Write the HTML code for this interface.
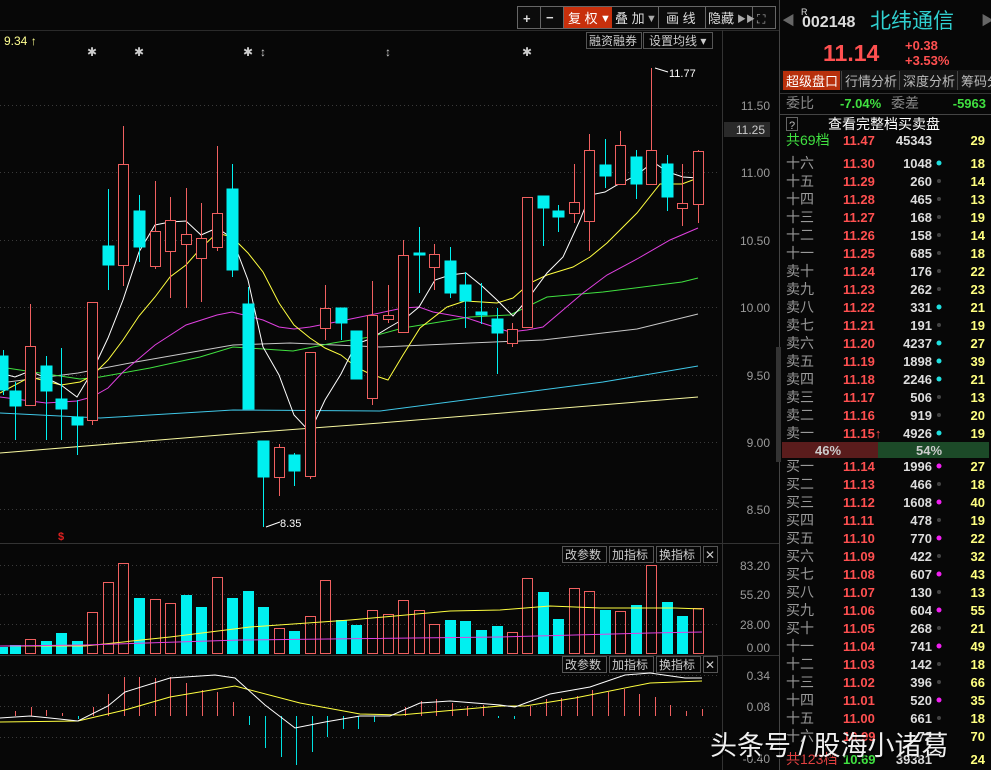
<!DOCTYPE html>
<html><head><meta charset="utf-8"><style>
html,body{margin:0;padding:0;background:#070707;width:991px;height:770px;overflow:hidden}
svg{display:block}
text{font-family:"Liberation Sans","Noto Sans CJK SC",sans-serif}
</style></head><body>
<svg width="991" height="770" viewBox="0 0 991 770" xmlns="http://www.w3.org/2000/svg">
<rect width="991" height="770" fill="#070707"/>
<!-- top toolbar -->
<g font-size="13" fill="#ddd">
<rect x="517.5" y="6.5" width="258" height="22" fill="#0c0c0c" stroke="#666"/>
<line x1="540.5" y1="6" x2="540.5" y2="29" stroke="#666"/>
<line x1="563.5" y1="6" x2="563.5" y2="29" stroke="#666"/>
<rect x="564" y="7" width="48" height="21" fill="#c8300c"/>
<line x1="658.5" y1="6" x2="658.5" y2="29" stroke="#666"/>
<line x1="705.5" y1="6" x2="705.5" y2="29" stroke="#666"/>
<line x1="752.5" y1="6" x2="752.5" y2="29" stroke="#666"/>
<text x="523" y="23" font-weight="bold">+</text>
<text x="546" y="22" font-weight="bold">−</text>
<text x="568" y="23" fill="#fff">复 权</text><text x="600" y="22" fill="#fff" font-size="11">▼</text>
<text x="615" y="23">叠 加</text><text x="646" y="22" fill="#aaa" font-size="11">▼</text>
<text x="666" y="23">画  线</text>
<text x="708" y="23">隐藏</text><text x="737" y="22" font-size="9" fill="#aaa">▶▶</text>
<text x="757" y="23" font-size="12" fill="#aaa">⛶</text>
</g>
<line x1="0" y1="30.5" x2="779" y2="30.5" stroke="#2a2a2a"/>
<text x="4" y="45" font-size="12" fill="#ffff90">9.34 ↑</text>
<g font-size="12" fill="#ccc">
<rect x="586.5" y="32.5" width="55" height="16" fill="none" stroke="#555"/>
<text x="589" y="45">融资融券</text>
<rect x="643.5" y="32.5" width="69" height="16" fill="none" stroke="#555"/>
<text x="649" y="45">设置均线 ▾</text>
</g>
<g font-size="12" fill="#ccc" text-anchor="middle">
<text x="92" y="56">✱</text><text x="139" y="56">✱</text><text x="248" y="56">✱</text><text x="263" y="56">↕</text><text x="388" y="56">↕</text><text x="527" y="56">✱</text>
</g>
<!-- grid -->
<g stroke="#3a3a3a" stroke-dasharray="1,3">
<line x1="0" y1="105.5" x2="720" y2="105.5"/><line x1="0" y1="172.5" x2="720" y2="172.5"/><line x1="0" y1="240.5" x2="720" y2="240.5"/><line x1="0" y1="307.5" x2="720" y2="307.5"/><line x1="0" y1="375.5" x2="720" y2="375.5"/><line x1="0" y1="442.5" x2="720" y2="442.5"/><line x1="0" y1="509.5" x2="720" y2="509.5"/>
<line x1="0" y1="565.5" x2="720" y2="565.5"/><line x1="0" y1="594.5" x2="720" y2="594.5"/><line x1="0" y1="624.5" x2="720" y2="624.5"/>
<line x1="0" y1="675.5" x2="720" y2="675.5"/><line x1="0" y1="706.5" x2="720" y2="706.5"/><line x1="0" y1="737.5" x2="720" y2="737.5"/>
</g>
<line x1="722.5" y1="30" x2="722.5" y2="770" stroke="#333"/>
<line x1="0" y1="543.5" x2="779" y2="543.5" stroke="#333"/>
<line x1="0" y1="655.5" x2="779" y2="655.5" stroke="#333"/>
<line x1="779.5" y1="0" x2="779.5" y2="770" stroke="#444"/>
<rect x="776" y="347" width="5" height="115" fill="#333"/>
<!-- axis labels -->
<g font-size="12" fill="#9a9a9a" text-anchor="end">
<text x="770" y="110">11.50</text>
<rect x="724" y="122" width="46" height="15" fill="#2a2a2a"/>
<text x="765" y="134" fill="#ccc">11.25</text>
<text x="770" y="177">11.00</text><text x="770" y="245">10.50</text><text x="770" y="312">10.00</text><text x="770" y="380">9.50</text><text x="770" y="447">9.00</text><text x="770" y="514">8.50</text>
<text x="770" y="570">83.20</text><text x="770" y="599">55.20</text><text x="770" y="629">28.00</text><text x="770" y="652">0.00</text>
<text x="770" y="680">0.34</text><text x="770" y="711">0.08</text><text x="770" y="763">-0.40</text>
</g>
<!-- MA lines -->
<g fill="none" stroke-width="1">
<polyline stroke="#f8f8a0" points="0,453 233,434 380,423 698,397"/>
<polyline stroke="#40c8e8" points="0,413 100,418 233,410 380,411 603,382 698,366"/>
<polyline stroke="#c8c8c8" points="0,383 78,373 130,363 233,345 290,343 380,347 470,343 543,340 637,329 698,314"/>
<polyline stroke="#40e040" points="0,367 80,379 100,377 150,368 200,357 233,347 293,351 333,343 370,337 403,328 470,317 510,315 547,297 603,292 682,282 698,278"/>
<polyline stroke="#e040e0" points="0,397 46,403 77,401 92,397 108,388 123,372 155,345 186,325 217,315 232,312 248,316 263,320 279,327 294,329 310,327 341,321 370,315 403,308 419,307 433,312 467,318 482,323 510,332 527,330 543,327 563,310 583,293 607,275 637,259 670,240 698,228"/>
<polyline stroke="#ffff40" points="0,393 30,377 61,385 80,382 92,376 108,360 123,340 139,316 155,297 170,277 186,265 201,248 217,233 232,237 248,253 263,272 279,303 294,325 310,338 325,348 341,355 356,367 370,374 388,380 403,355 420,328 447,307 465,301 482,302 497,303 513,298 530,283 547,275 573,267 590,257 607,243 623,227 637,213 660,184 682,184 698,178"/>
<polyline stroke="#ffffff" points="0,373 15,377 30,371 46,378 61,385 77,397 92,372 108,338 123,300 139,252 155,225 170,222 186,221 201,235 217,228 232,238 248,280 263,347 279,375 294,415 310,432 325,400 341,374 356,344 370,339 388,328 407,317 419,307 435,280 450,275 466,273 482,286 497,300 513,316 527,300 547,273 563,257 580,220 590,195 605,192 617,185 637,175 653,162 668,172 683,177 698,178"/>
</g>
<!-- candles -->
<g stroke-width="1" shape-rendering="crispEdges">
<g stroke="#00f0f0" fill="#00f0f0">
<line x1="3.5" y1="350" x2="3.5" y2="395"/><rect x="-2" y="356" width="10" height="34"/>
<line x1="15.5" y1="382" x2="15.5" y2="440"/><rect x="10" y="391" width="11" height="15"/>
<line x1="46.5" y1="356" x2="46.5" y2="440"/><rect x="41" y="366" width="11" height="25"/>
<line x1="61.5" y1="348" x2="61.5" y2="440"/><rect x="56" y="399" width="11" height="10"/>
<line x1="77.5" y1="400" x2="77.5" y2="455"/><rect x="72" y="417" width="11" height="8"/>
<line x1="108.5" y1="189" x2="108.5" y2="290"/><rect x="103" y="246" width="11" height="19"/>
<line x1="139.5" y1="195" x2="139.5" y2="262"/><rect x="134" y="211" width="11" height="36"/>
<line x1="232.5" y1="164" x2="232.5" y2="277"/><rect x="227" y="189" width="11" height="81"/>
<line x1="248.5" y1="287" x2="248.5" y2="409"/><rect x="243" y="304" width="11" height="105"/>
<line x1="263.5" y1="441" x2="263.5" y2="527"/><rect x="258" y="441" width="11" height="36"/>
<line x1="294.5" y1="453" x2="294.5" y2="486"/><rect x="289" y="455" width="11" height="16"/>
<line x1="341.5" y1="308" x2="341.5" y2="340"/><rect x="336" y="308" width="11" height="15"/>
<line x1="356.5" y1="331" x2="356.5" y2="379"/><rect x="351" y="331" width="11" height="48"/>
<line x1="419.5" y1="227" x2="419.5" y2="293"/><rect x="414" y="253" width="11" height="2"/>
<line x1="450.5" y1="247" x2="450.5" y2="298"/><rect x="445" y="261" width="11" height="32"/>
<line x1="465.5" y1="272" x2="465.5" y2="328"/><rect x="460" y="285" width="11" height="16"/>
<line x1="481.5" y1="283" x2="481.5" y2="324"/><rect x="476" y="312" width="11" height="3"/>
<line x1="497.5" y1="308" x2="497.5" y2="374"/><rect x="492" y="319" width="11" height="14"/>
<line x1="543.5" y1="196" x2="543.5" y2="246"/><rect x="538" y="196" width="11" height="12"/>
<line x1="558.5" y1="205" x2="558.5" y2="232"/><rect x="553" y="211" width="11" height="6"/>
<line x1="605.5" y1="139" x2="605.5" y2="188"/><rect x="600" y="165" width="11" height="11"/>
<line x1="636.5" y1="150" x2="636.5" y2="199"/><rect x="631" y="157" width="11" height="27"/>
<line x1="667.5" y1="155" x2="667.5" y2="211"/><rect x="662" y="164" width="11" height="33"/>
</g>
<g stroke="#f06060" fill="#070707">
<line x1="30.5" y1="304" x2="30.5" y2="406"/><rect x="25.5" y="346.5" width="10" height="59"/>
<line x1="92.5" y1="302" x2="92.5" y2="425"/><rect x="87.5" y="302.5" width="10" height="118"/>
<line x1="123.5" y1="126" x2="123.5" y2="286"/><rect x="118.5" y="164.5" width="10" height="101"/>
<line x1="155.5" y1="181" x2="155.5" y2="269"/><rect x="150.5" y="231.5" width="10" height="35"/>
<line x1="170.5" y1="197" x2="170.5" y2="298"/><rect x="165.5" y="220.5" width="10" height="31"/>
<line x1="186.5" y1="188" x2="186.5" y2="308"/><rect x="181.5" y="234.5" width="10" height="10"/>
<line x1="201.5" y1="203" x2="201.5" y2="302"/><rect x="196.5" y="238.5" width="10" height="20"/>
<line x1="217.5" y1="146" x2="217.5" y2="251"/><rect x="212.5" y="213.5" width="10" height="34"/>
<line x1="279.5" y1="444" x2="279.5" y2="496"/><rect x="274.5" y="447.5" width="10" height="30"/>
<line x1="310.5" y1="352" x2="310.5" y2="479"/><rect x="305.5" y="352.5" width="10" height="124"/>
<line x1="325.5" y1="285" x2="325.5" y2="340"/><rect x="320.5" y="308.5" width="10" height="20"/>
<line x1="372.5" y1="281" x2="372.5" y2="405"/><rect x="367.5" y="315.5" width="10" height="83"/>
<line x1="388.5" y1="285" x2="388.5" y2="323"/><rect x="383.5" y="315.5" width="10" height="4"/>
<line x1="403.5" y1="240" x2="403.5" y2="332"/><rect x="398.5" y="255.5" width="10" height="77"/>
<line x1="434.5" y1="244" x2="434.5" y2="290"/><rect x="429.5" y="254.5" width="10" height="13"/>
<line x1="512.5" y1="323" x2="512.5" y2="347"/><rect x="507.5" y="329.5" width="10" height="14"/>
<rect x="522.5" y="197.5" width="10" height="130"/>
<line x1="574.5" y1="164" x2="574.5" y2="223"/><rect x="569.5" y="202.5" width="10" height="11"/>
<line x1="589.5" y1="134" x2="589.5" y2="251"/><rect x="584.5" y="150.5" width="10" height="71"/>
<line x1="620.5" y1="131" x2="620.5" y2="184"/><rect x="615.5" y="145.5" width="10" height="39"/>
<line x1="651.5" y1="68" x2="651.5" y2="184"/><rect x="646.5" y="150.5" width="10" height="34"/>
<line x1="682.5" y1="164" x2="682.5" y2="226"/><rect x="677.5" y="203.5" width="10" height="5"/>
<line x1="698.5" y1="150" x2="698.5" y2="223"/><rect x="693.5" y="151.5" width="10" height="53"/>
</g>
</g>
<g font-size="11" fill="#fff" font-family="Liberation Mono,monospace">
<line x1="655" y1="68" x2="668" y2="72" stroke="#fff"/><text x="669" y="77">11.77</text>
<line x1="266" y1="527" x2="280" y2="522" stroke="#fff"/><text x="280" y="527">8.35</text>
</g>
<text x="58" y="540" font-size="11" fill="#e02020" font-weight="bold">$</text>
<!-- panel buttons -->
<g font-size="12" fill="#ccc">
<rect x="562.5" y="546.5" width="44" height="16" fill="none" stroke="#555"/><text x="565" y="559">改参数</text>
<rect x="609.5" y="546.5" width="44" height="16" fill="none" stroke="#555"/><text x="612" y="559">加指标</text>
<rect x="656.5" y="546.5" width="44" height="16" fill="none" stroke="#555"/><text x="659" y="559">换指标</text>
<rect x="703.5" y="546.5" width="14" height="16" fill="none" stroke="#555"/><text x="705" y="559">✕</text>
<rect x="562.5" y="656.5" width="44" height="16" fill="none" stroke="#555"/><text x="565" y="669">改参数</text>
<rect x="609.5" y="656.5" width="44" height="16" fill="none" stroke="#555"/><text x="612" y="669">加指标</text>
<rect x="656.5" y="656.5" width="44" height="16" fill="none" stroke="#555"/><text x="659" y="669">换指标</text>
<rect x="703.5" y="656.5" width="14" height="16" fill="none" stroke="#555"/><text x="705" y="669">✕</text>
</g>
<!-- volume bars -->
<g shape-rendering="crispEdges">
<g fill="#00f0f0">
<rect x="-2" y="647" width="10" height="7"/><rect x="10" y="645" width="11" height="9"/><rect x="41" y="641" width="11" height="13"/><rect x="56" y="633" width="11" height="21"/><rect x="72" y="641" width="11" height="13"/>
<rect x="134" y="598" width="11" height="56"/><rect x="181" y="595" width="11" height="59"/><rect x="196" y="607" width="11" height="47"/><rect x="227" y="598" width="11" height="56"/><rect x="243" y="591" width="11" height="63"/><rect x="258" y="607" width="11" height="47"/>
<rect x="289" y="631" width="11" height="23"/><rect x="336" y="620" width="11" height="34"/><rect x="351" y="625" width="11" height="29"/>
<rect x="445" y="620" width="11" height="34"/><rect x="460" y="621" width="11" height="33"/><rect x="476" y="630" width="11" height="24"/><rect x="492" y="626" width="11" height="28"/>
<rect x="538" y="592" width="11" height="62"/><rect x="553" y="619" width="11" height="35"/><rect x="600" y="610" width="11" height="44"/><rect x="631" y="605" width="11" height="49"/><rect x="662" y="602" width="11" height="52"/><rect x="677" y="616" width="11" height="38"/>
</g>
<g fill="none" stroke="#f06060">
<rect x="25.5" y="639.5" width="10" height="14"/><rect x="87.5" y="612.5" width="10" height="41"/><rect x="103.5" y="582.5" width="10" height="71"/><rect x="118.5" y="563.5" width="10" height="90"/>
<rect x="150.5" y="599.5" width="10" height="54"/><rect x="165.5" y="603.5" width="10" height="50"/><rect x="212.5" y="577.5" width="10" height="76"/>
<rect x="274.5" y="628.5" width="10" height="25"/><rect x="305.5" y="616.5" width="10" height="37"/><rect x="320.5" y="580.5" width="10" height="73"/>
<rect x="367.5" y="610.5" width="10" height="43"/><rect x="383.5" y="614.5" width="10" height="39"/><rect x="398.5" y="600.5" width="10" height="53"/><rect x="414.5" y="610.5" width="10" height="43"/><rect x="429.5" y="624.5" width="10" height="29"/>
<rect x="507.5" y="632.5" width="10" height="21"/><rect x="522.5" y="578.5" width="10" height="75"/><rect x="569.5" y="588.5" width="10" height="65"/><rect x="584.5" y="591.5" width="10" height="62"/>
<rect x="615.5" y="611.5" width="10" height="42"/><rect x="646.5" y="565.5" width="10" height="88"/><rect x="693.5" y="608.5" width="10" height="45"/>
</g>
</g>
<polyline fill="none" stroke="#ffff40" points="0,646 85,646 170,637 250,627 350,620 450,611 500,610 550,606 600,608 675,608 702,609"/>
<polyline fill="none" stroke="#e040e0" points="0,646 85,645 240,640 500,637 650,633 702,632"/>
<!-- MACD -->
<g stroke-width="1" shape-rendering="crispEdges">
<g stroke="#f06060">
<line x1="15.5" y1="711" x2="15.5" y2="716"/><line x1="31.5" y1="707" x2="31.5" y2="716"/><line x1="46.5" y1="710" x2="46.5" y2="716"/><line x1="62.5" y1="713" x2="62.5" y2="716"/>
<line x1="93.5" y1="707" x2="93.5" y2="716"/><line x1="108.5" y1="694" x2="108.5" y2="716"/><line x1="124.5" y1="677" x2="124.5" y2="716"/><line x1="139.5" y1="677" x2="139.5" y2="716"/><line x1="155.5" y1="678" x2="155.5" y2="716"/><line x1="170.5" y1="677" x2="170.5" y2="716"/><line x1="186.5" y1="683" x2="186.5" y2="716"/><line x1="202.5" y1="690" x2="202.5" y2="716"/><line x1="217.5" y1="692" x2="217.5" y2="716"/><line x1="233.5" y1="702" x2="233.5" y2="716"/>
<line x1="405.5" y1="707" x2="405.5" y2="716"/><line x1="421.5" y1="701" x2="421.5" y2="716"/><line x1="436.5" y1="699" x2="436.5" y2="716"/><line x1="452.5" y1="703" x2="452.5" y2="716"/><line x1="467.5" y1="706" x2="467.5" y2="716"/><line x1="483.5" y1="705" x2="483.5" y2="716"/>
<line x1="530.5" y1="706" x2="530.5" y2="716"/><line x1="546.5" y1="699" x2="546.5" y2="716"/><line x1="561.5" y1="698" x2="561.5" y2="716"/><line x1="577.5" y1="696" x2="577.5" y2="716"/><line x1="592.5" y1="690" x2="592.5" y2="716"/><line x1="608.5" y1="692" x2="608.5" y2="716"/><line x1="624.5" y1="689" x2="624.5" y2="716"/><line x1="639.5" y1="694" x2="639.5" y2="716"/><line x1="655.5" y1="697" x2="655.5" y2="716"/><line x1="670.5" y1="705" x2="670.5" y2="716"/><line x1="686.5" y1="711" x2="686.5" y2="716"/><line x1="702.5" y1="709" x2="702.5" y2="716"/>
</g>
<g stroke="#00e0e0">
<line x1="78.5" y1="716" x2="78.5" y2="719"/><line x1="249.5" y1="716" x2="249.5" y2="725"/><line x1="265.5" y1="716" x2="265.5" y2="748"/><line x1="281.5" y1="716" x2="281.5" y2="757"/><line x1="296.5" y1="716" x2="296.5" y2="765"/><line x1="312.5" y1="716" x2="312.5" y2="752"/><line x1="327.5" y1="716" x2="327.5" y2="737"/><line x1="343.5" y1="716" x2="343.5" y2="729"/><line x1="358.5" y1="716" x2="358.5" y2="729"/><line x1="374.5" y1="716" x2="374.5" y2="722"/><line x1="498.5" y1="716" x2="498.5" y2="718"/><line x1="514.5" y1="716" x2="514.5" y2="719"/>
</g>
</g>
<polyline fill="none" stroke="#ffff40" points="0,722 78,721 125,710 170,697 235,686 300,703 360,714 400,715 500,706 525,706 575,698 650,683 702,681"/>
<polyline fill="none" stroke="#ffffff" points="0,718 30,716 50,718 78,721 108,706 125,692 170,678 215,675 235,678 265,705 295,728 325,722 360,716 390,716 420,703 450,701 500,705 515,707 550,694 590,687 625,675 650,673 685,678 702,678"/>
<!-- right panel -->
<g font-family="Liberation Sans,'Noto Sans CJK SC',sans-serif">
<text x="782" y="25" font-size="13" fill="#666">◀</text>
<text x="981" y="25" font-size="13" fill="#666">▶</text>
<text x="801" y="15" font-size="9" fill="#ddd">R</text>
<text x="802" y="27" font-size="16" fill="#ddd" font-weight="bold">002148</text>
<text x="870" y="28" font-size="21" fill="#30d0d0">北纬通信</text>
<text x="823" y="61" font-size="23" fill="#ff5050" font-weight="bold">11.14</text>
<text x="905" y="50" font-size="13" fill="#ff5050" font-weight="bold">+0.38</text>
<text x="905" y="65" font-size="13" fill="#ff5050" font-weight="bold">+3.53%</text>
<rect x="780" y="70" width="211" height="20" fill="#151515"/>
<rect x="783" y="71" width="57" height="19" fill="#b8300c"/>
<line x1="841.5" y1="71" x2="841.5" y2="90" stroke="#444"/><line x1="899.5" y1="71" x2="899.5" y2="90" stroke="#444"/><line x1="957.5" y1="71" x2="957.5" y2="90" stroke="#444"/>
<g font-size="13"><text x="786" y="86" fill="#fff">超级盘口</text><text x="845" y="86" fill="#bbb">行情分析</text><text x="903" y="86" fill="#bbb">深度分析</text><text x="961" y="86" fill="#bbb">筹码分</text></g>
<line x1="780" y1="93.5" x2="991" y2="93.5" stroke="#333"/>
<text x="786" y="108" font-size="14" fill="#888">委比</text>
<text x="840" y="108" font-size="13" fill="#40e040" font-weight="bold">-7.04%</text>
<text x="891" y="108" font-size="14" fill="#888">委差</text>
<text x="986" y="108" font-size="13" fill="#40e040" font-weight="bold" text-anchor="end">-5963</text>
<line x1="780" y1="114.5" x2="991" y2="114.5" stroke="#444"/>
<rect x="786.5" y="117.5" width="11" height="13" fill="none" stroke="#666"/><text x="789" y="129" font-size="11" fill="#bbb">?</text>
<text x="828" y="129" font-size="14" fill="#fff">查看完整档买卖盘</text>
<g font-size="13" font-weight="bold">
<text x="786" y="145" fill="#40e040" font-weight="normal" font-size="14">共69档</text><text x="843" y="145" fill="#ff5050">11.47</text><text x="932" y="145" fill="#ddd" text-anchor="end">45343</text><text x="985" y="145" fill="#ffff80" text-anchor="end">29</text>
</g>
<g font-size="13" font-weight="bold">
<g font-weight="normal" font-size="14" fill="#999">
<text x="786" y="168">十六</text><text x="786" y="186">十五</text><text x="786" y="204">十四</text><text x="786" y="222">十三</text><text x="786" y="240">十二</text><text x="786" y="258">十一</text><text x="786" y="276">卖十</text><text x="786" y="294">卖九</text><text x="786" y="312">卖八</text><text x="786" y="330">卖七</text><text x="786" y="348">卖六</text><text x="786" y="366">卖五</text><text x="786" y="384">卖四</text><text x="786" y="402">卖三</text><text x="786" y="420">卖二</text><text x="786" y="438">卖一</text>
<text x="786" y="471">买一</text><text x="786" y="489">买二</text><text x="786" y="507">买三</text><text x="786" y="525">买四</text><text x="786" y="543">买五</text><text x="786" y="561">买六</text><text x="786" y="579">买七</text><text x="786" y="597">买八</text><text x="786" y="615">买九</text><text x="786" y="633">买十</text><text x="786" y="651">十一</text><text x="786" y="669">十二</text><text x="786" y="687">十三</text><text x="786" y="705">十四</text><text x="786" y="723">十五</text><text x="786" y="741">十六</text>
<text x="786" y="764" fill="#e04040">共123档</text>
</g>
<g fill="#ff5050">
<text x="843" y="168">11.30</text><text x="843" y="186">11.29</text><text x="843" y="204">11.28</text><text x="843" y="222">11.27</text><text x="843" y="240">11.26</text><text x="843" y="258">11.25</text><text x="843" y="276">11.24</text><text x="843" y="294">11.23</text><text x="843" y="312">11.22</text><text x="843" y="330">11.21</text><text x="843" y="348">11.20</text><text x="843" y="366">11.19</text><text x="843" y="384">11.18</text><text x="843" y="402">11.17</text><text x="843" y="420">11.16</text><text x="843" y="438">11.15↑</text>
<text x="843" y="471">11.14</text><text x="843" y="489">11.13</text><text x="843" y="507">11.12</text><text x="843" y="525">11.11</text><text x="843" y="543">11.10</text><text x="843" y="561">11.09</text><text x="843" y="579">11.08</text><text x="843" y="597">11.07</text><text x="843" y="615">11.06</text><text x="843" y="633">11.05</text><text x="843" y="651">11.04</text><text x="843" y="669">11.03</text><text x="843" y="687">11.02</text><text x="843" y="705">11.01</text><text x="843" y="723">11.00</text><text x="843" y="741">10.99</text>
<text x="843" y="764" fill="#40e040">10.69</text>
</g>
<g fill="#ddd" text-anchor="end">
<text x="932" y="168">1048</text><text x="932" y="186">260</text><text x="932" y="204">465</text><text x="932" y="222">168</text><text x="932" y="240">158</text><text x="932" y="258">685</text><text x="932" y="276">176</text><text x="932" y="294">262</text><text x="932" y="312">331</text><text x="932" y="330">191</text><text x="932" y="348">4237</text><text x="932" y="366">1898</text><text x="932" y="384">2246</text><text x="932" y="402">506</text><text x="932" y="420">919</text><text x="932" y="438">4926</text>
<text x="932" y="471">1996</text><text x="932" y="489">466</text><text x="932" y="507">1608</text><text x="932" y="525">478</text><text x="932" y="543">770</text><text x="932" y="561">422</text><text x="932" y="579">607</text><text x="932" y="597">130</text><text x="932" y="615">604</text><text x="932" y="633">268</text><text x="932" y="651">741</text><text x="932" y="669">142</text><text x="932" y="687">396</text><text x="932" y="705">520</text><text x="932" y="723">661</text><text x="932" y="741">72</text><text x="932" y="764">39381</text>
</g>
<g fill="#ffff80" text-anchor="end">
<text x="985" y="168">18</text><text x="985" y="186">14</text><text x="985" y="204">13</text><text x="985" y="222">19</text><text x="985" y="240">14</text><text x="985" y="258">18</text><text x="985" y="276">22</text><text x="985" y="294">23</text><text x="985" y="312">21</text><text x="985" y="330">19</text><text x="985" y="348">27</text><text x="985" y="366">39</text><text x="985" y="384">21</text><text x="985" y="402">13</text><text x="985" y="420">20</text><text x="985" y="438">19</text>
<text x="985" y="471">27</text><text x="985" y="489">18</text><text x="985" y="507">40</text><text x="985" y="525">19</text><text x="985" y="543">22</text><text x="985" y="561">32</text><text x="985" y="579">43</text><text x="985" y="597">13</text><text x="985" y="615">55</text><text x="985" y="633">21</text><text x="985" y="651">49</text><text x="985" y="669">18</text><text x="985" y="687">66</text><text x="985" y="705">35</text><text x="985" y="723">18</text><text x="985" y="741">70</text><text x="985" y="764">24</text>
</g>
</g>
<g>
<circle cx="939" cy="163" r="2.5" fill="#20e0e0"/><circle cx="939" cy="181" r="2" fill="#444"/><circle cx="939" cy="199" r="2" fill="#444"/><circle cx="939" cy="217" r="2" fill="#444"/><circle cx="939" cy="235" r="2" fill="#444"/><circle cx="939" cy="253" r="2" fill="#444"/><circle cx="939" cy="271" r="2" fill="#444"/><circle cx="939" cy="289" r="2" fill="#444"/><circle cx="939" cy="307" r="2.5" fill="#20e0e0"/><circle cx="939" cy="325" r="2" fill="#444"/><circle cx="939" cy="343" r="2.5" fill="#20e0e0"/><circle cx="939" cy="361" r="2.5" fill="#20e0e0"/><circle cx="939" cy="379" r="2.5" fill="#20e0e0"/><circle cx="939" cy="397" r="2" fill="#444"/><circle cx="939" cy="415" r="2" fill="#444"/><circle cx="939" cy="433" r="2.5" fill="#20e0e0"/>
<circle cx="939" cy="466" r="2.5" fill="#f020f0"/><circle cx="939" cy="484" r="2" fill="#444"/><circle cx="939" cy="502" r="2.5" fill="#f020f0"/><circle cx="939" cy="520" r="2" fill="#444"/><circle cx="939" cy="538" r="2.5" fill="#f020f0"/><circle cx="939" cy="556" r="2" fill="#444"/><circle cx="939" cy="574" r="2.5" fill="#f020f0"/><circle cx="939" cy="592" r="2" fill="#444"/><circle cx="939" cy="610" r="2.5" fill="#f020f0"/><circle cx="939" cy="628" r="2" fill="#444"/><circle cx="939" cy="646" r="2.5" fill="#f020f0"/><circle cx="939" cy="664" r="2" fill="#444"/><circle cx="939" cy="682" r="2" fill="#444"/><circle cx="939" cy="700" r="2.5" fill="#f020f0"/><circle cx="939" cy="718" r="2" fill="#444"/>
</g>
<rect x="782" y="442" width="96" height="16" fill="#5a1c1c"/>
<rect x="878" y="442" width="111" height="16" fill="#1c4a28"/>
<text x="815" y="455" font-size="13" fill="#ccc" font-weight="bold">46%</text>
<text x="916" y="455" font-size="13" fill="#ccc" font-weight="bold">54%</text>
</g>
<!-- watermark -->
<text x="712" y="757" font-size="27" fill="#000" opacity="0.6" font-family="'Noto Sans CJK SC',sans-serif">头条号 / 股海小诸葛</text>
<text x="710" y="755" font-size="27" fill="#f0f0f0" font-family="'Noto Sans CJK SC',sans-serif">头条号 / 股海小诸葛</text>
</svg>
</body></html>
